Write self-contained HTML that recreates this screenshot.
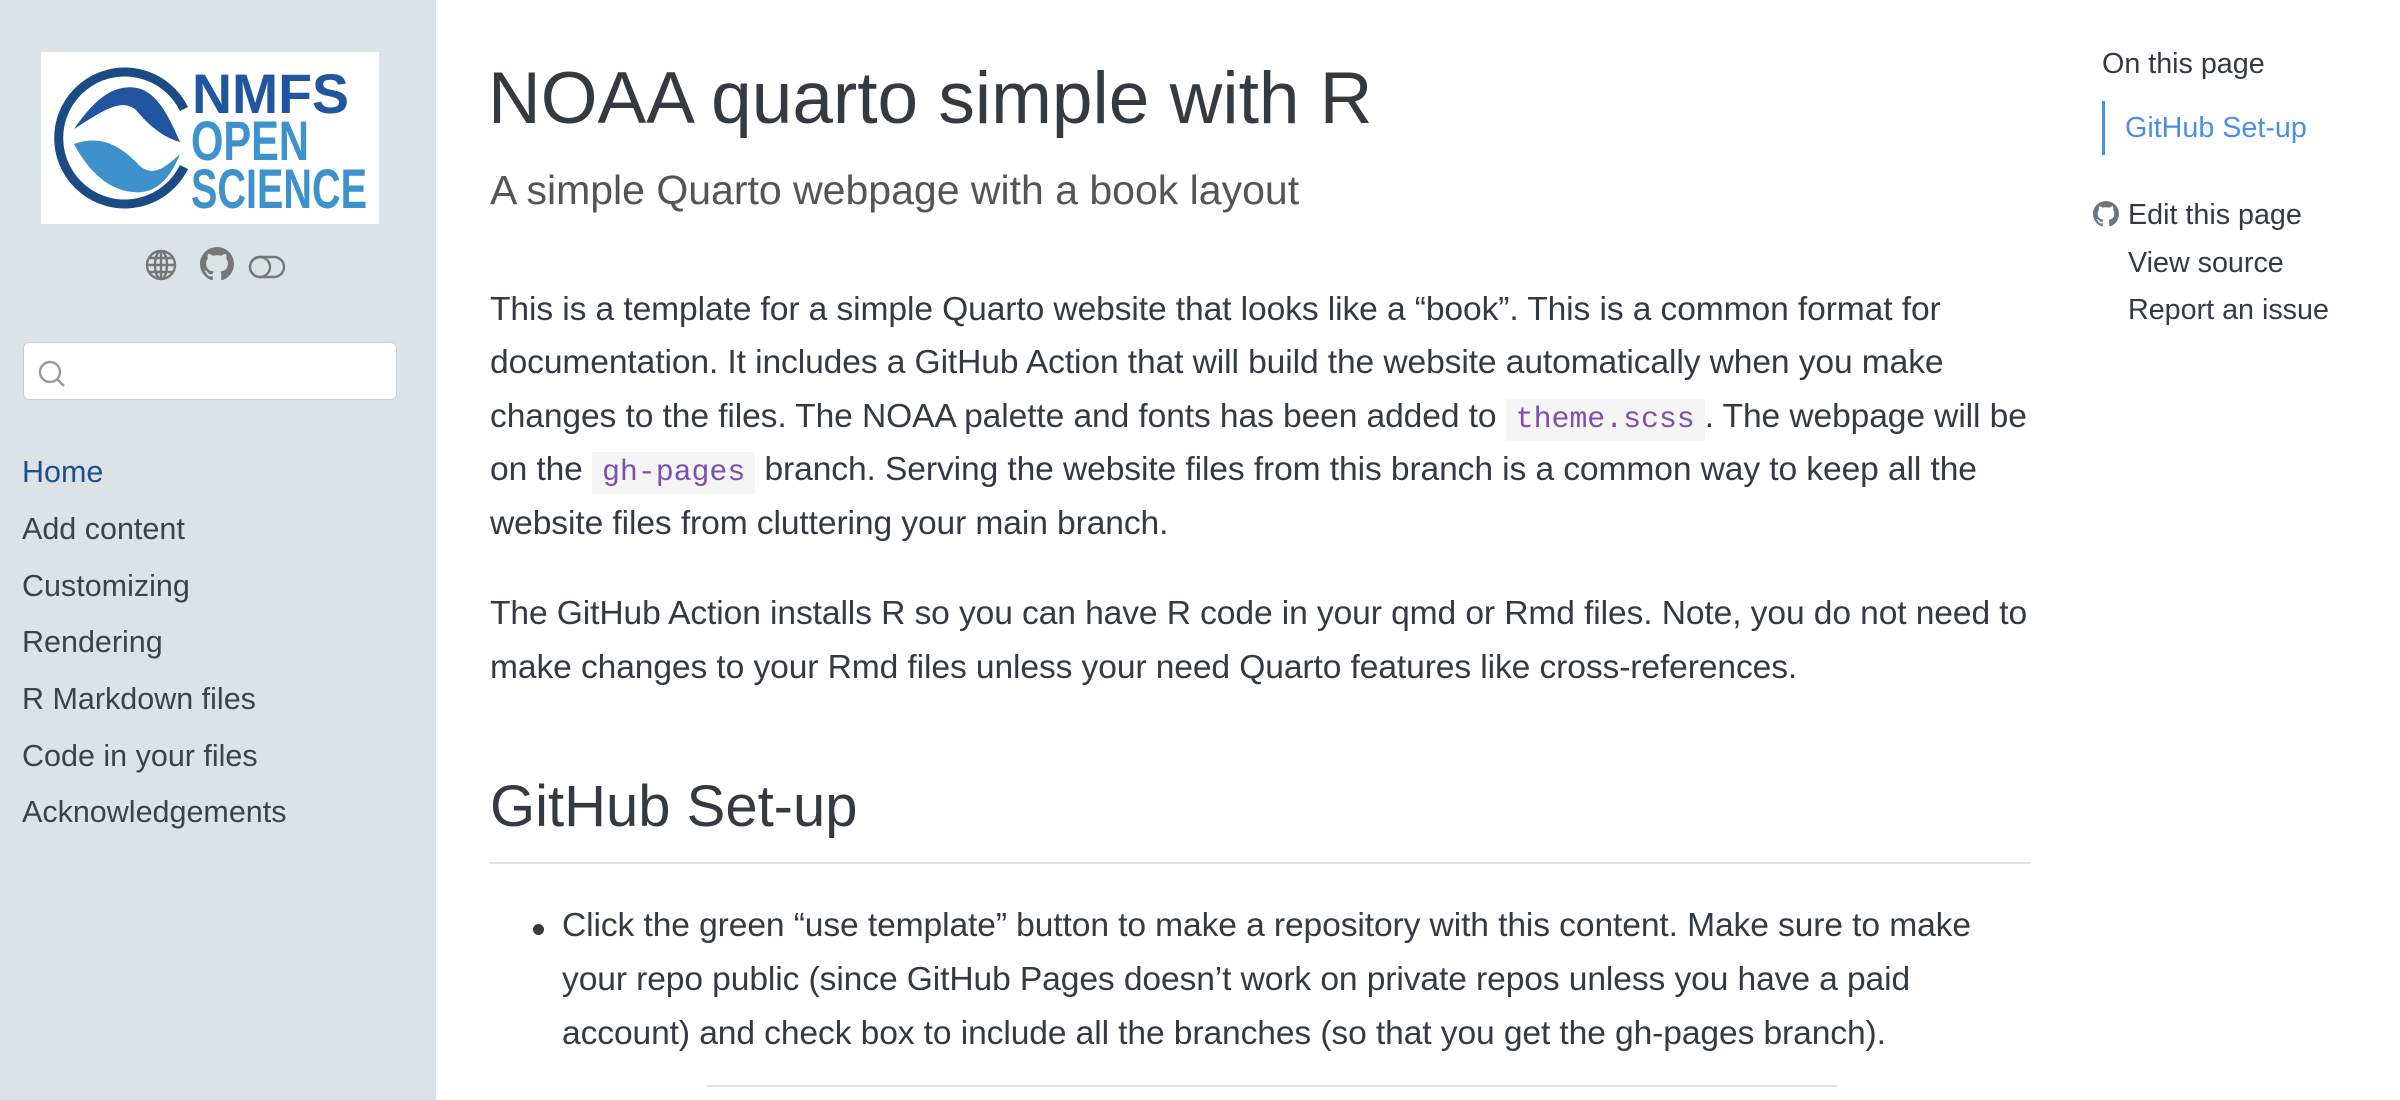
<!DOCTYPE html>
<html><head><meta charset="utf-8">
<style>
html,body{margin:0;padding:0;width:2400px;height:1100px;overflow:hidden;background:#fff;font-family:"Liberation Sans",sans-serif;color:#343a40}
.side{position:absolute;left:0;top:0;width:436px;height:1100px;background:#dce3e6}
.abs{position:absolute;white-space:nowrap}
.nav{left:22px;font-size:30.5px;color:#3c4248}
.p{left:490px;font-size:33.6px;letter-spacing:-0.1px;color:#343a40}
code{font-family:"Liberation Mono",monospace;color:#7d4fb0;background:#f5f5f5;padding:4px 10px;font-size:30px}
.toc{font-size:28.7px;color:#343a40}
</style></head><body>
<div class="side"></div>
<svg class="abs" style="left:41px;top:52px" width="338" height="172" viewBox="0 0 338 172">
<rect width="338" height="172" fill="#fff"/>
<path d="M143 57 A66 66 0 1 0 143 115" fill="none" stroke="#1b4b82" stroke-width="9"/>
<path d="M33 77 C55 45 75 30 100 37 C120 45 130 70 139 90 C120 85 105 70 95 58 C80 45 60 60 33 77Z" fill="#2155a0"/>
<path d="M33 92 C60 82 80 95 95 110 C110 128 125 115 139 102 C130 125 115 143 92 140 C65 138 45 115 33 92Z" fill="#3d92cc"/>
<text x="151" y="61" font-family="Liberation Sans" font-weight="bold" font-size="56" fill="#2155a0" textLength="157" lengthAdjust="spacingAndGlyphs">NMFS</text>
<text x="150" y="108" font-family="Liberation Sans" font-weight="bold" font-size="56" fill="#3d92cc" textLength="118" lengthAdjust="spacingAndGlyphs">OPEN</text>
<text x="150" y="156" font-family="Liberation Sans" font-weight="bold" font-size="56" fill="#3d92cc" textLength="176" lengthAdjust="spacingAndGlyphs">SCIENCE</text>
</svg>
<svg class="abs" style="left:144px;top:248px" width="34" height="34" viewBox="0 0 34 34" fill="none" stroke="#777" stroke-width="2.4">
<circle cx="17" cy="17" r="14"/><ellipse cx="17" cy="17" rx="6" ry="14"/><line x1="17" y1="3" x2="17" y2="31"/><line x1="3" y1="17" x2="31" y2="17"/><line x1="5" y1="10" x2="29" y2="10"/><line x1="5" y1="24" x2="29" y2="24"/></svg>
<svg class="abs" style="left:200px;top:247px" width="34" height="34" viewBox="0 0 16 16"><path fill="#777" d="M8 0C3.58 0 0 3.580 0 8c0 3.54 2.29 6.53 5.47 7.59.4.07.55-.17.55-.38 0-.19-.01-.82-.01-1.49-2.01.37-2.53-.49-2.69-.94-.09-.23-.48-.94-.82-1.13-.28-.15-.68-.52-.01-.53.63-.01 1.08.58 1.23.82.72 1.21 1.87.87 2.33.66.07-.52.28-.87.51-1.07-1.78-.2-3.64-.89-3.64-3.95 0-.87.31-1.59.82-2.15-.08-.2-.36-1.02.08-2.12 0 0 .67-.21 2.2.82.64-.18 1.32-.27 2-.27.68 0 1.36.09 2 .27 1.53-1.04 2.2-.82 2.2-.82.44 1.1.16 1.92.08 2.12.51.56.82 1.27.82 2.15 0 3.07-1.87 3.75-3.65 3.95.29.25.54.73.54 1.48 0 1.07-.01 1.93-.01 2.2 0 .21.15.46.55.38A8.013 8.013 0 0016 8c0-4.42-3.58-8-8-8z"/></svg>
<svg class="abs" style="left:248px;top:254px" width="38" height="26" viewBox="0 0 38 26" fill="none" stroke="#777" stroke-width="2.4"><rect x="2" y="3" width="34" height="20" rx="10"/><circle cx="12" cy="13" r="10"/></svg>
<div class="abs" style="left:23px;top:342px;width:372px;height:56px;background:#fff;border:1.5px solid #ccd;border-radius:6px"></div>
<svg class="abs" style="left:38px;top:360px" width="30" height="30" viewBox="0 0 30 30" fill="none" stroke="#999" stroke-width="2.4"><circle cx="12" cy="12" r="10"/><line x1="19" y1="19" x2="26" y2="26"/></svg>
<div class="abs nav" style="top:455px;color:#1f4e8c">Home</div>
<div class="abs nav" style="top:512px">Add content</div>
<div class="abs nav" style="top:569px">Customizing</div>
<div class="abs nav" style="top:625px">Rendering</div>
<div class="abs nav" style="top:682px">R Markdown files</div>
<div class="abs nav" style="top:739px">Code in your files</div>
<div class="abs nav" style="top:795px">Acknowledgements</div>

<div class="abs" style="left:488px;top:57px;font-size:73px;color:#343a40">NOAA quarto simple with R</div>
<div class="abs" style="left:490px;top:167px;font-size:41px;color:#555">A simple Quarto webpage with a book layout</div>

<div class="abs p" style="top:291px">This is a template for a simple Quarto website that looks like a “book”. This is a common format for</div>
<div class="abs p" style="top:344px">documentation. It includes a GitHub Action that will build the website automatically when you make</div>
<div class="abs p" style="top:398px">changes to the files. The NOAA palette and fonts has been added to <code>theme.scss</code>. The webpage will be</div>
<div class="abs p" style="top:451px">on the <code>gh-pages</code> branch. Serving the website files from this branch is a common way to keep all the</div>
<div class="abs p" style="top:505px">website files from cluttering your main branch.</div>
<div class="abs p" style="top:595px">The GitHub Action installs R so you can have R code in your qmd or Rmd files. Note, you do not need to</div>
<div class="abs p" style="top:649px">make changes to your Rmd files unless your need Quarto features like cross-references.</div>
<div class="abs" style="left:490px;top:773px;font-size:58px;color:#343a40">GitHub Set-up</div>
<div class="abs" style="left:490px;top:862px;width:1540px;height:2px;background:#dee2e6"></div>
<div class="abs" style="left:533px;top:924px;width:11px;height:11px;border-radius:50%;background:#343a40"></div>
<div class="abs p" style="left:562px;top:907px">Click the green “use template” button to make a repository with this content. Make sure to make</div>
<div class="abs p" style="left:562px;top:961px">your repo public (since GitHub Pages doesn’t work on private repos unless you have a paid</div>
<div class="abs p" style="left:562px;top:1015px">account) and check box to include all the branches (so that you get the gh-pages branch).</div>
<div class="abs" style="left:707px;top:1085px;width:1130px;height:2px;background:#dee2e6"></div>

<div class="abs toc" style="left:2102px;top:48px">On this page</div>
<div class="abs" style="left:2102px;top:101px;width:3px;height:54px;background:#4a90e2"></div>
<div class="abs toc" style="left:2125px;top:112px;color:#4a90e2">GitHub Set-up</div>
<svg class="abs" style="left:2093px;top:201px" width="26" height="26" viewBox="0 0 16 16"><path fill="#6c757d" d="M8 0C3.58 0 0 3.58 0 8c0 3.54 2.29 6.53 5.47 7.59.4.07.55-.17.55-.38 0-.19-.01-.82-.01-1.49-2.01.37-2.53-.49-2.69-.94-.09-.23-.48-.94-.82-1.13-.28-.15-.68-.52-.01-.53.63-.01 1.08.58 1.23.82.72 1.21 1.87.87 2.33.66.07-.52.28-.87.51-1.07-1.78-.2-3.64-.89-3.64-3.95 0-.87.31-1.59.82-2.15-.08-.2-.36-1.02.08-2.12 0 0 .67-.21 2.2.82.64-.18 1.32-.27 2-.27.68 0 1.36.09 2 .27 1.53-1.04 2.2-.82 2.2-.82.44 1.1.16 1.92.08 2.12.51.56.82 1.27.82 2.15 0 3.07-1.87 3.75-3.65 3.95.29.25.54.73.54 1.48 0 1.07-.01 1.93-.01 2.2 0 .21.15.46.55.38A8.013 8.013 0 0016 8c0-4.42-3.58-8-8-8z"/></svg>
<div class="abs toc" style="left:2128px;top:199px">Edit this page</div>
<div class="abs toc" style="left:2128px;top:247px">View source</div>
<div class="abs toc" style="left:2128px;top:294px">Report an issue</div>
</body></html>
